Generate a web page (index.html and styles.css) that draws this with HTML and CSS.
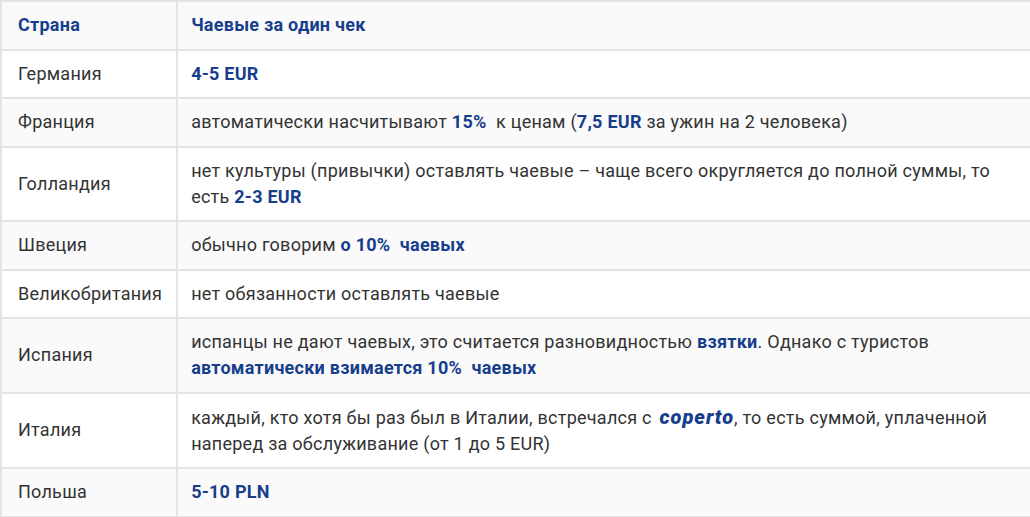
FILE: index.html
```html
<!DOCTYPE html>
<html lang="ru">
<head>
<meta charset="utf-8">
<title>Чаевые</title>
<link rel="stylesheet" href="styles.css">
</head>
<body>
<table class="tips">
  <thead>
    <tr><th class="country">Страна</th><th>Чаевые за один чек</th></tr>
  </thead>
  <tbody>
    <tr><td class="country">Германия</td><td><b>4-5 EUR</b></td></tr>
    <tr><td class="country">Франция</td><td>автоматически насчитывают <b>15%&nbsp;</b> к ценам (<b>7,5 EUR</b> за ужин на 2 человека)</td></tr>
    <tr><td class="country">Голландия</td><td>нет культуры (привычки) оставлять чаевые – чаще всего округляется до полной суммы, то есть <b>2-3 EUR</b></td></tr>
    <tr><td class="country">Швеция</td><td>обычно говорим <b>о 10%&nbsp; чаевых</b></td></tr>
    <tr><td class="country">Великобритания</td><td>нет обязанности оставлять чаевые</td></tr>
    <tr><td class="country">Испания</td><td>испанцы не дают чаевых, это считается разновидностью <b>взятки</b>. Однако с туристов <b>автоматически взимается 10%&nbsp; чаевых</b></td></tr>
    <tr><td class="country">Италия</td><td>каждый, кто хотя бы раз был в Италии, встречался с <b class="term"><i>coperto</i></b>, то есть суммой, уплаченной наперед за обслуживание (от 1 до 5 EUR)</td></tr>
    <tr><td class="country">Польша</td><td><b>5-10 PLN</b></td></tr>
  </tbody>
</table>
</body>
</html>
```

FILE: styles.css
```css
html, body {
  margin: 0;
  padding: 0;
  background: #ffffff;
}
.tips {
  border-collapse: collapse;
  width: 1040px;
  font-family: Roboto, "Liberation Sans", Arial, sans-serif;
  font-size: 18px;
  letter-spacing: 0.25px;
  line-height: 26px;
  color: #333333;
}
.tips th,
.tips td {
  border: 2px solid #e4e4e4;
  padding: 10px 14px 10.5px 13px;
  text-align: left;
  vertical-align: middle;
}
.tips th {
  font-weight: 700;
  color: #173e8c;
}
.tips .country {
  width: 142px;
  padding-left: 16px;
}
.tips thead tr {
  background: #fafafa;
}
.tips tbody tr:nth-child(odd) {
  background: #ffffff;
}
.tips tbody tr:nth-child(even) {
  background: #fafafa;
}
.tips b {
  font-weight: 700;
  color: #173e8c;
}
.tips i {
  font-style: italic;
}
.tips .term {
  font-size: 20px;
  letter-spacing: 1px;
  margin-left: 3px;
  font-weight: 900;
}
```
